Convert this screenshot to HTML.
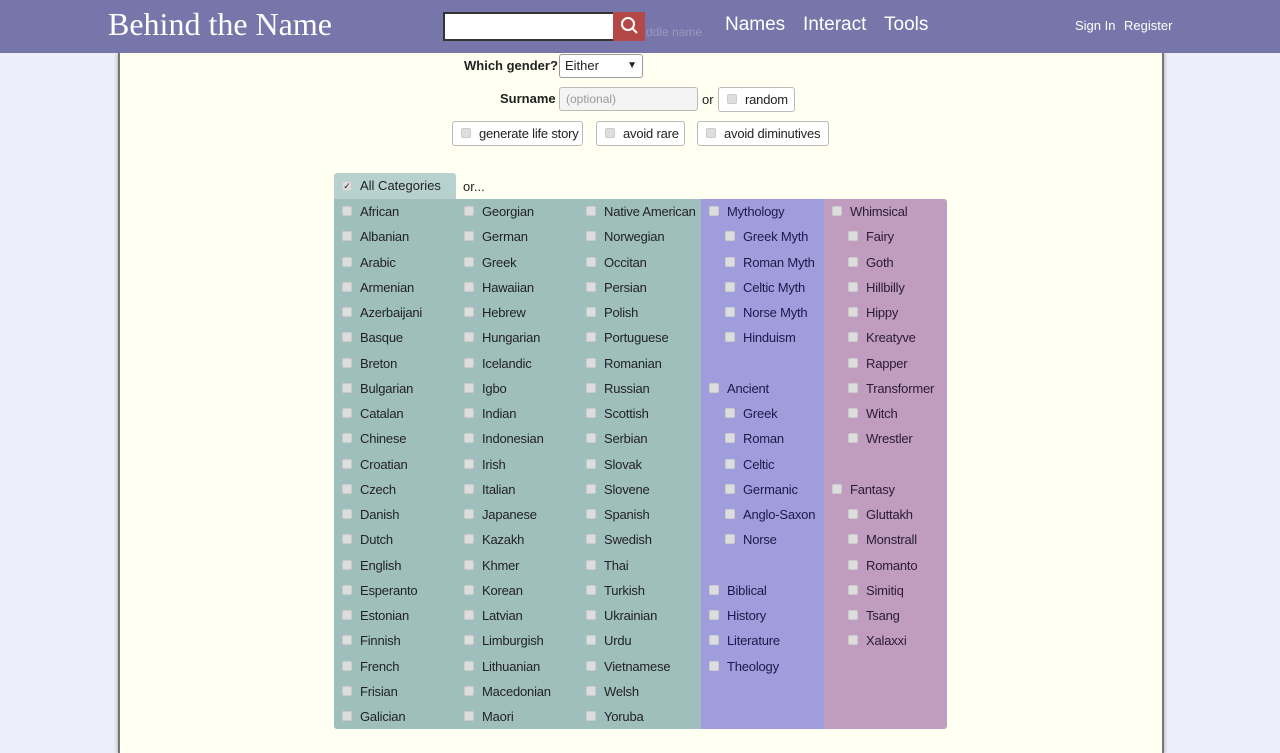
<!DOCTYPE html>
<html><head><meta charset="utf-8"><style>
*{box-sizing:border-box}
body{margin:0;width:1280px;height:732px;overflow:hidden;background:#eeeefa;font-family:"Liberation Sans",sans-serif;font-size:13px;color:#222;position:relative}
.hdr{position:absolute;left:0;top:0;width:1280px;height:53px;background:#7676aa}
.page{position:absolute;left:118px;top:53px;width:1046px;height:700px;background:#fffff2;border-left:2px solid #777;border-right:2px solid #777;box-shadow:0 0 4px #999}
.logo{position:absolute;left:108px;top:6px;font-family:"Liberation Serif",serif;font-size:32px;color:#fff}
.sbox{position:absolute;left:443px;top:12px;width:171px;height:29px;background:#fff;border:2px solid #333;border-right:none}
.sbtn{position:absolute;left:613px;top:12px;width:32px;height:29px;background:#b44848}
.nav{position:absolute;top:14px;font-size:19px;color:#fff}
.sm{position:absolute;top:18px;font-size:13px;color:#fff}
.a{position:absolute}
.btn{position:absolute;height:25px;border:1px solid #bbb;border-radius:3px;background:#fff;font-size:13px;line-height:23px;padding-left:26px;color:#222;white-space:nowrap;letter-spacing:-0.2px}
.cb{display:inline-block;width:10px;height:10px;background:#ddd;border:1px solid #ccc;border-radius:2px;position:absolute}
.btn .cb{left:8px;top:6px}
.col{position:absolute;top:199px;height:530px;white-space:nowrap;letter-spacing:-0.2px}
.it{position:relative;height:25.25px;line-height:25px}
.it .cb{top:7px}
</style></head><body>
<div class="page"></div>
<div class="hdr"></div>
<div class="logo">Behind the Name</div>
<div class="sbox"></div>
<div class="sbtn"><svg width="32" height="29"><circle cx="15" cy="12" r="6" fill="none" stroke="#fff" stroke-width="2"/><line x1="19" y1="16" x2="24" y2="21" stroke="#fff" stroke-width="2"/></svg></div>
<div class="a" style="left:646px;top:25px;color:#9898c0;font-size:12px">ddle name</div>
<div class="nav" style="left:725px">Names</div>
<div class="nav" style="left:803px">Interact</div>
<div class="nav" style="left:884px">Tools</div>
<div class="sm" style="left:1075px">Sign In</div>
<div class="sm" style="left:1124px">Register</div>

<div class="a" style="left:464px;top:58px;font-weight:bold">Which gender?</div>
<div class="a" style="left:559px;top:54px;width:84px;height:24px;border:1px solid #999;border-radius:3px;background:#fff;line-height:22px;padding-left:5px">Either<span style="position:absolute;right:5px;font-size:10px">▼</span></div>
<div class="a" style="left:500px;top:91px;font-weight:bold">Surname</div>
<div class="a" style="left:559px;top:87px;width:139px;height:24px;border:1px solid #bbb;border-radius:3px;background:#f4f4f4;line-height:22px;padding-left:6px;color:#999;font-size:12px">(optional)</div>
<div class="a" style="left:702px;top:92px">or</div>
<div class="btn" style="left:718px;top:87px;width:77px">random<span class="cb"></span></div>
<div class="btn" style="left:452px;top:121px;width:131px">generate life story<span class="cb"></span></div>
<div class="btn" style="left:596px;top:121px;width:89px">avoid rare<span class="cb"></span></div>
<div class="btn" style="left:697px;top:121px;width:132px">avoid diminutives<span class="cb"></span></div>

<div class="a" style="left:334px;top:173px;width:122px;height:26px;background:#b7d1cf;border-radius:3px 3px 0 0;line-height:26px;padding-left:26px">All Categories<span class="cb" style="left:8px;top:8px;font-size:9px;line-height:8px;text-align:center">✓</span></div>
<div class="a" style="left:463px;top:179px">or...</div>
<div class="a" style="left:334px;top:199px;width:367px;height:530px;background:#9fbfbd;border-radius:0 0 0 3px"></div>
<div class="a" style="left:701px;top:199px;width:123px;height:530px;background:#a09ddd"></div>
<div class="a" style="left:824px;top:199px;width:123px;height:530px;background:#c09cbf;border-radius:0 3px 3px 0"></div>

<div class="col" style="left:342px;width:120px">
<div class="it"><span class="cb"></span><span style="margin-left:18px">African</span></div>
<div class="it"><span class="cb"></span><span style="margin-left:18px">Albanian</span></div>
<div class="it"><span class="cb"></span><span style="margin-left:18px">Arabic</span></div>
<div class="it"><span class="cb"></span><span style="margin-left:18px">Armenian</span></div>
<div class="it"><span class="cb"></span><span style="margin-left:18px">Azerbaijani</span></div>
<div class="it"><span class="cb"></span><span style="margin-left:18px">Basque</span></div>
<div class="it"><span class="cb"></span><span style="margin-left:18px">Breton</span></div>
<div class="it"><span class="cb"></span><span style="margin-left:18px">Bulgarian</span></div>
<div class="it"><span class="cb"></span><span style="margin-left:18px">Catalan</span></div>
<div class="it"><span class="cb"></span><span style="margin-left:18px">Chinese</span></div>
<div class="it"><span class="cb"></span><span style="margin-left:18px">Croatian</span></div>
<div class="it"><span class="cb"></span><span style="margin-left:18px">Czech</span></div>
<div class="it"><span class="cb"></span><span style="margin-left:18px">Danish</span></div>
<div class="it"><span class="cb"></span><span style="margin-left:18px">Dutch</span></div>
<div class="it"><span class="cb"></span><span style="margin-left:18px">English</span></div>
<div class="it"><span class="cb"></span><span style="margin-left:18px">Esperanto</span></div>
<div class="it"><span class="cb"></span><span style="margin-left:18px">Estonian</span></div>
<div class="it"><span class="cb"></span><span style="margin-left:18px">Finnish</span></div>
<div class="it"><span class="cb"></span><span style="margin-left:18px">French</span></div>
<div class="it"><span class="cb"></span><span style="margin-left:18px">Frisian</span></div>
<div class="it"><span class="cb"></span><span style="margin-left:18px">Galician</span></div>
</div>
<div class="col" style="left:464px;width:120px">
<div class="it"><span class="cb"></span><span style="margin-left:18px">Georgian</span></div>
<div class="it"><span class="cb"></span><span style="margin-left:18px">German</span></div>
<div class="it"><span class="cb"></span><span style="margin-left:18px">Greek</span></div>
<div class="it"><span class="cb"></span><span style="margin-left:18px">Hawaiian</span></div>
<div class="it"><span class="cb"></span><span style="margin-left:18px">Hebrew</span></div>
<div class="it"><span class="cb"></span><span style="margin-left:18px">Hungarian</span></div>
<div class="it"><span class="cb"></span><span style="margin-left:18px">Icelandic</span></div>
<div class="it"><span class="cb"></span><span style="margin-left:18px">Igbo</span></div>
<div class="it"><span class="cb"></span><span style="margin-left:18px">Indian</span></div>
<div class="it"><span class="cb"></span><span style="margin-left:18px">Indonesian</span></div>
<div class="it"><span class="cb"></span><span style="margin-left:18px">Irish</span></div>
<div class="it"><span class="cb"></span><span style="margin-left:18px">Italian</span></div>
<div class="it"><span class="cb"></span><span style="margin-left:18px">Japanese</span></div>
<div class="it"><span class="cb"></span><span style="margin-left:18px">Kazakh</span></div>
<div class="it"><span class="cb"></span><span style="margin-left:18px">Khmer</span></div>
<div class="it"><span class="cb"></span><span style="margin-left:18px">Korean</span></div>
<div class="it"><span class="cb"></span><span style="margin-left:18px">Latvian</span></div>
<div class="it"><span class="cb"></span><span style="margin-left:18px">Limburgish</span></div>
<div class="it"><span class="cb"></span><span style="margin-left:18px">Lithuanian</span></div>
<div class="it"><span class="cb"></span><span style="margin-left:18px">Macedonian</span></div>
<div class="it"><span class="cb"></span><span style="margin-left:18px">Maori</span></div>
</div>
<div class="col" style="left:586px;width:120px">
<div class="it"><span class="cb"></span><span style="margin-left:18px">Native American</span></div>
<div class="it"><span class="cb"></span><span style="margin-left:18px">Norwegian</span></div>
<div class="it"><span class="cb"></span><span style="margin-left:18px">Occitan</span></div>
<div class="it"><span class="cb"></span><span style="margin-left:18px">Persian</span></div>
<div class="it"><span class="cb"></span><span style="margin-left:18px">Polish</span></div>
<div class="it"><span class="cb"></span><span style="margin-left:18px">Portuguese</span></div>
<div class="it"><span class="cb"></span><span style="margin-left:18px">Romanian</span></div>
<div class="it"><span class="cb"></span><span style="margin-left:18px">Russian</span></div>
<div class="it"><span class="cb"></span><span style="margin-left:18px">Scottish</span></div>
<div class="it"><span class="cb"></span><span style="margin-left:18px">Serbian</span></div>
<div class="it"><span class="cb"></span><span style="margin-left:18px">Slovak</span></div>
<div class="it"><span class="cb"></span><span style="margin-left:18px">Slovene</span></div>
<div class="it"><span class="cb"></span><span style="margin-left:18px">Spanish</span></div>
<div class="it"><span class="cb"></span><span style="margin-left:18px">Swedish</span></div>
<div class="it"><span class="cb"></span><span style="margin-left:18px">Thai</span></div>
<div class="it"><span class="cb"></span><span style="margin-left:18px">Turkish</span></div>
<div class="it"><span class="cb"></span><span style="margin-left:18px">Ukrainian</span></div>
<div class="it"><span class="cb"></span><span style="margin-left:18px">Urdu</span></div>
<div class="it"><span class="cb"></span><span style="margin-left:18px">Vietnamese</span></div>
<div class="it"><span class="cb"></span><span style="margin-left:18px">Welsh</span></div>
<div class="it"><span class="cb"></span><span style="margin-left:18px">Yoruba</span></div>
</div>
<div class="col" style="left:709px;width:118px;color:#1a1a4a">
<div class="it"><span class="cb"></span><span style="margin-left:18px">Mythology</span></div>
<div class="it" style="margin-left:16px"><span class="cb"></span><span style="margin-left:18px">Greek Myth</span></div>
<div class="it" style="margin-left:16px"><span class="cb"></span><span style="margin-left:18px">Roman Myth</span></div>
<div class="it" style="margin-left:16px"><span class="cb"></span><span style="margin-left:18px">Celtic Myth</span></div>
<div class="it" style="margin-left:16px"><span class="cb"></span><span style="margin-left:18px">Norse Myth</span></div>
<div class="it" style="margin-left:16px"><span class="cb"></span><span style="margin-left:18px">Hinduism</span></div>
<div class="it"></div>
<div class="it"><span class="cb"></span><span style="margin-left:18px">Ancient</span></div>
<div class="it" style="margin-left:16px"><span class="cb"></span><span style="margin-left:18px">Greek</span></div>
<div class="it" style="margin-left:16px"><span class="cb"></span><span style="margin-left:18px">Roman</span></div>
<div class="it" style="margin-left:16px"><span class="cb"></span><span style="margin-left:18px">Celtic</span></div>
<div class="it" style="margin-left:16px"><span class="cb"></span><span style="margin-left:18px">Germanic</span></div>
<div class="it" style="margin-left:16px"><span class="cb"></span><span style="margin-left:18px">Anglo-Saxon</span></div>
<div class="it" style="margin-left:16px"><span class="cb"></span><span style="margin-left:18px">Norse</span></div>
<div class="it"></div>
<div class="it"><span class="cb"></span><span style="margin-left:18px">Biblical</span></div>
<div class="it"><span class="cb"></span><span style="margin-left:18px">History</span></div>
<div class="it"><span class="cb"></span><span style="margin-left:18px">Literature</span></div>
<div class="it"><span class="cb"></span><span style="margin-left:18px">Theology</span></div>
</div>
<div class="col" style="left:832px;width:118px;color:#2a1a3a">
<div class="it"><span class="cb"></span><span style="margin-left:18px">Whimsical</span></div>
<div class="it" style="margin-left:16px"><span class="cb"></span><span style="margin-left:18px">Fairy</span></div>
<div class="it" style="margin-left:16px"><span class="cb"></span><span style="margin-left:18px">Goth</span></div>
<div class="it" style="margin-left:16px"><span class="cb"></span><span style="margin-left:18px">Hillbilly</span></div>
<div class="it" style="margin-left:16px"><span class="cb"></span><span style="margin-left:18px">Hippy</span></div>
<div class="it" style="margin-left:16px"><span class="cb"></span><span style="margin-left:18px">Kreatyve</span></div>
<div class="it" style="margin-left:16px"><span class="cb"></span><span style="margin-left:18px">Rapper</span></div>
<div class="it" style="margin-left:16px"><span class="cb"></span><span style="margin-left:18px">Transformer</span></div>
<div class="it" style="margin-left:16px"><span class="cb"></span><span style="margin-left:18px">Witch</span></div>
<div class="it" style="margin-left:16px"><span class="cb"></span><span style="margin-left:18px">Wrestler</span></div>
<div class="it"></div>
<div class="it"><span class="cb"></span><span style="margin-left:18px">Fantasy</span></div>
<div class="it" style="margin-left:16px"><span class="cb"></span><span style="margin-left:18px">Gluttakh</span></div>
<div class="it" style="margin-left:16px"><span class="cb"></span><span style="margin-left:18px">Monstrall</span></div>
<div class="it" style="margin-left:16px"><span class="cb"></span><span style="margin-left:18px">Romanto</span></div>
<div class="it" style="margin-left:16px"><span class="cb"></span><span style="margin-left:18px">Simitiq</span></div>
<div class="it" style="margin-left:16px"><span class="cb"></span><span style="margin-left:18px">Tsang</span></div>
<div class="it" style="margin-left:16px"><span class="cb"></span><span style="margin-left:18px">Xalaxxi</span></div>
</div>
</body></html>
